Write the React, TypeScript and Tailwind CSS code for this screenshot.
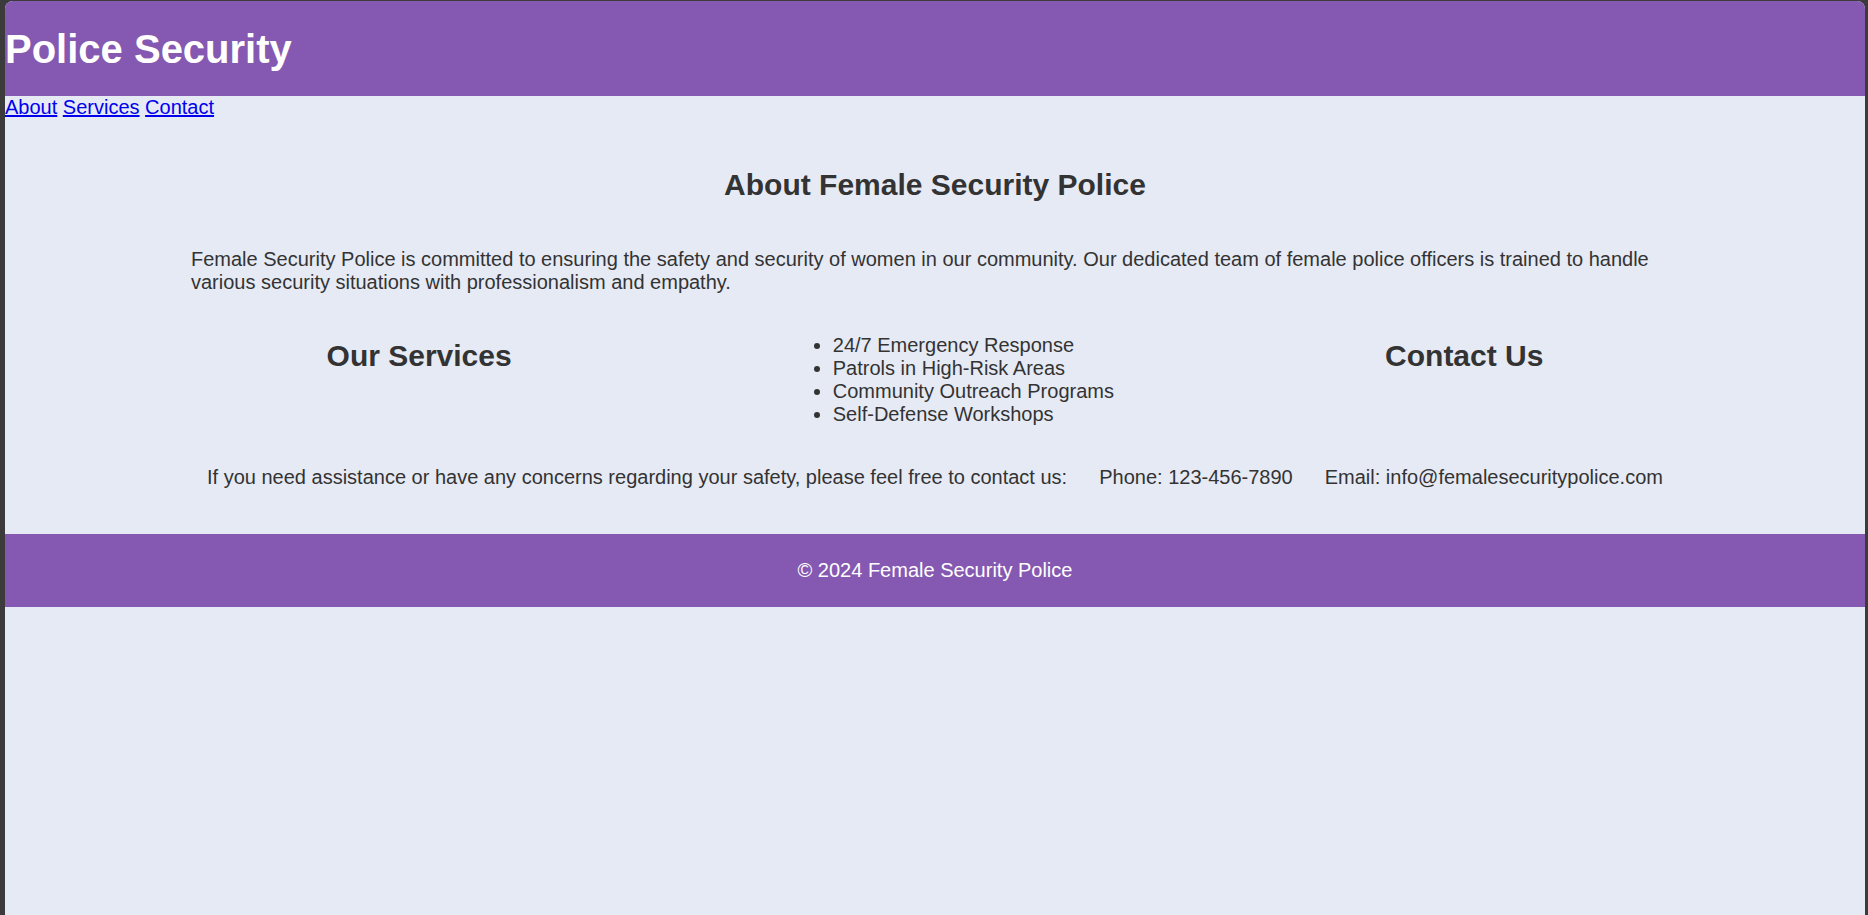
import React from "react";

export default function App() {
  return (
    <div
      className="h-screen w-full bg-[#3b3b3b] pt-[1px] pl-[5px] pr-[3px] overflow-hidden"
      style={{ fontFamily: '"Liberation Sans", Arial, sans-serif' }}
    >
      <div className="h-full rounded-t-[8px] overflow-hidden bg-[#e6eaf5] text-[#333333] text-[20px] leading-[23px]">
        <header className="bg-[#8559b1] text-white py-[24.5px]">
          <h1 className="text-[40px] leading-[46px] font-bold m-0">Police Security</h1>
        </header>
        <nav className="leading-[23px]">
          <a href="#about" className="text-[#0000ee] underline">About</a>{" "}
          <a href="#services" className="text-[#0000ee] underline">Services</a>{" "}
          <a href="#contact" className="text-[#0000ee] underline">Contact</a>
        </nav>
        <main className="w-[80%] mx-auto pt-[24px] pb-[25px] flex flex-wrap justify-around">
          <h2 className="text-[30px] leading-[34.5px] font-bold my-[25px]">About Female Security Police</h2>
          <p className="my-[20px]">
            Female Security Police is committed to ensuring the safety and security of women in our community. Our dedicated team of female police officers is trained to handle various security situations with professionalism and empathy.
          </p>
          <h2 className="text-[30px] leading-[34.5px] font-bold my-[25px]">Our Services</h2>
          <ul className="list-disc pl-[50px] my-[20px]">
            <li>24/7 Emergency Response</li>
            <li>Patrols in High-Risk Areas</li>
            <li>Community Outreach Programs</li>
            <li>Self-Defense Workshops</li>
          </ul>
          <h2 className="text-[30px] leading-[34.5px] font-bold my-[25px]">Contact Us</h2>
          <p className="my-[20px]">If you need assistance or have any concerns regarding your safety, please feel free to contact us:</p>
          <p className="my-[20px]">Phone: 123-456-7890</p>
          <p className="my-[20px]">Email: info@femalesecuritypolice.com</p>
        </main>
        <footer className="bg-[#8559b1] text-white text-center py-[25px]">
          <p>© 2024 Female Security Police</p>
        </footer>
      </div>
    </div>
  );
}
